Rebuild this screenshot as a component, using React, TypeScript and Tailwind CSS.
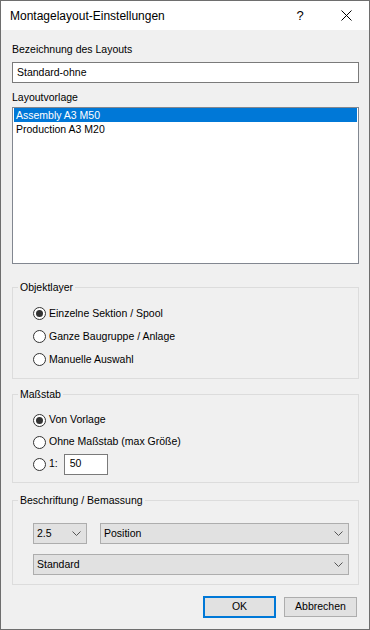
import React from "react";

const Chevron = () => (
    <svg width="9" height="5" viewBox="0 0 9 5" className="shrink-0">
        <path d="M0.5 0.5 L4.5 4.5 L8.5 0.5" fill="none" stroke="#555" strokeWidth="1" />
    </svg>
);

const Radio = ({ checked }: { checked?: boolean }) => (
    <span className="flex h-[13px] w-[13px] shrink-0 items-center justify-center rounded-full border border-[#333] bg-white">
        {checked && <span className="h-[7px] w-[7px] rounded-full bg-[#333]" />}
    </span>
);

const RadioRow = ({ label, checked, className }: { label: string; checked?: boolean; className: string }) => (
    <div className={`flex items-center gap-[3px] ${className}`}>
        <Radio checked={checked} />
        <span>{label}</span>
    </div>
);

const Select = ({ value, className }: { value: string; className: string }) => (
    <div
        className={`flex h-[21px] items-center justify-between border border-[#adadad] bg-[#e1e1e1] pl-[3px] pr-[5px] ${className}`}
    >
        <span>{value}</span>
        <Chevron />
    </div>
);

const Group = ({
    title,
    className,
    children,
}: {
    title: string;
    className: string;
    children: React.ReactNode;
}) => (
    <fieldset className={`border border-[#dcdcdc] ${className}`}>
        <legend className="ml-[5px] px-[2px] leading-[14px]">{title}</legend>
        {children}
    </fieldset>
);

export default function App() {
    return (
        <div className="flex h-[630px] w-[370px] flex-col border border-[#6e6e6e] bg-[#f0f0f0] font-['Liberation_Sans',Arial,sans-serif] text-[10.5px] text-black">
            <div className="flex h-[29px] shrink-0 items-center bg-white">
                <span className="flex-1 pl-[9px] text-[12px]">Montagelayout-Einstellungen</span>
                <span className="flex h-full w-[46px] items-center justify-center text-[13px] font-light">?</span>
                <span className="flex h-full w-[46px] items-center justify-center">
                    <svg width="11" height="11" viewBox="0 0 11 11">
                        <path d="M0.5 0.5 L10.5 10.5 M10.5 0.5 L0.5 10.5" stroke="#000" strokeWidth="1" />
                    </svg>
                </span>
            </div>

            <div className="flex flex-col pl-[11px] pr-[10px]">
                <div className="mt-[12px] leading-[14px]">Bezeichnung des Layouts</div>
                <div className="mt-[6px] flex h-[21px] items-center border border-[#7a7a7a] bg-white pl-[4px]">
                    Standard-ohne
                </div>

                <div className="mt-[7px] leading-[14px]">Layoutvorlage</div>
                <div className="mt-[3px] h-[157px] border border-[#828790] bg-white px-[1px]">
                    <div className="h-[14px] bg-[#0078d7] pl-[2px] leading-[14px] text-white">Assembly A3 M50</div>
                    <div className="h-[14px] pl-[2px] leading-[14px]">Production A3 M20</div>
                </div>

                <Group title="Objektlayer" className="mt-[16px] pb-[7px]">
                    <div className="mt-[8px] pl-[20px]">
                        <RadioRow checked label="Einzelne Sektion / Spool" className="h-[23px]" />
                        <RadioRow label="Ganze Baugruppe / Anlage" className="h-[23px]" />
                        <RadioRow label="Manuelle Auswahl" className="h-[23px]" />
                    </div>
                </Group>

                <Group title="Maßstab" className="mt-[8px] pb-[7px]">
                    <div className="mt-[8px] pl-[20px]">
                        <RadioRow checked label="Von Vorlage" className="h-[22px]" />
                        <RadioRow label="Ohne Maßstab (max Größe)" className="h-[22px]" />
                        <div className="flex h-[22px] items-center">
                            <Radio />
                            <span className="ml-[3px]">1:</span>
                            <div className="ml-[6px] flex h-[21px] w-[44px] items-center border border-[#7a7a7a] bg-white pl-[5px]">
                                50
                            </div>
                        </div>
                    </div>
                </Group>

                <Group title="Beschriftung / Bemassung" className="mt-[10px] pb-[9px]">
                    <div className="mt-[16px] pl-[20px] pr-[9px]">
                        <div className="flex gap-[13px]">
                            <Select value="2.5" className="w-[54px]" />
                            <Select value="Position" className="flex-1" />
                        </div>
                        <Select value="Standard" className="mt-[10px]" />
                    </div>
                </Group>

                <div className="mt-[11px] flex justify-end gap-[8px] pr-[2px]">
                    <button className="flex h-[22px] w-[73px] items-center justify-center border-2 border-[#0078d7] bg-[#e1e1e1]">
                        OK
                    </button>
                    <button className="my-[1px] flex h-[20px] w-[73px] items-center justify-center border border-[#adadad] bg-[#e1e1e1]">
                        Abbrechen
                    </button>
                </div>
            </div>
        </div>
    );
}
